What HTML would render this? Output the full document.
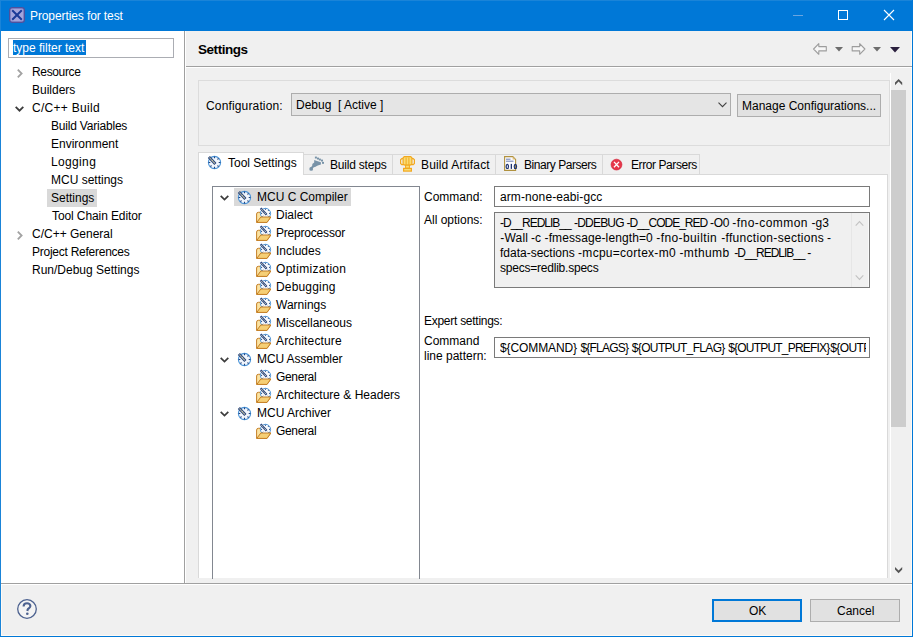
<!DOCTYPE html>
<html><head><meta charset="utf-8">
<style>
html,body{margin:0;padding:0;}
body{width:913px;height:637px;position:relative;overflow:hidden;background:#f0f0f0;font-family:"Liberation Sans",sans-serif;font-size:12px;color:#000;}
.a{position:absolute;}
.t{position:absolute;white-space:pre;line-height:15px;font-size:12px;}
.hl{position:absolute;background:#d9d9d9;}
svg{position:absolute;overflow:visible;}
</style></head><body>

<svg width="0" height="0" style="position:absolute;left:0;top:0">
 <defs>
  <symbol id="clk" viewBox="0 0 16 16">
   <circle cx="8.5" cy="8.5" r="6.1" fill="#f2f6fc" stroke="#4a94d8" stroke-width="1.1"/>
   <path d="M8.5 2.6 V4.3 M8.5 12.7 V14.4 M2.6 8.5 H4.3 M12.7 8.5 H14.4 M4.4 12.6 L5.5 11.5 M12.6 12.6 L11.5 11.5 M12.6 4.4 L11.5 5.5" stroke="#23437e" stroke-width="1.1"/>
   <path d="M2.9 2.9 L9.4 9.9" stroke="#22407c" stroke-width="2.9"/>
   <path d="M3.4 3.5 L8.8 9.3" stroke="#ebe1a8" stroke-width="1.05"/>
   <path d="M3.7 3.8 L8.6 9.1" stroke="#22407c" stroke-width="0.9" stroke-dasharray="0.8 1.4"/>
  </symbol>
  <symbol id="fld" viewBox="0 0 16 16">
   <path d="M0.6 15.4 V7 Q0.6 5.3 2.4 5.3 H6 V10 H14.8 L11 15.4 Z" fill="#fbe3a2" stroke="#c47f26" stroke-width="1"/>
   <circle cx="9.5" cy="6.4" r="5.1" fill="#f6f9fd" stroke="#4f97d8" stroke-width="1"/>
   <path d="M9.5 1.7 V2.8 M14.1 6.4 H13 M5 6.4 H6.1 M12.7 3.2 L11.9 4 M12.7 9.6 L11.9 8.8 M6.3 9.6 L7.1 8.8" stroke="#2a4a82" stroke-width="1"/>
   <path d="M4.6 1.3 L10.6 7.7" stroke="#2a4682" stroke-width="2.2"/>
   <path d="M5.2 2 L10.1 7.2" stroke="#f0e8bc" stroke-width="1" stroke-dasharray="1 0.9"/>
   <path d="M0.8 15.4 L4.8 10 H14.8 L11 15.4 Z" fill="#f5cf76" stroke="#c47f26" stroke-width="1"/>
  </symbol>
 </defs>
</svg>

<!-- window frame -->
<div class="a" style="left:0;top:0;width:913px;height:31px;background:#0078d7;"></div>
<div class="a" style="left:0;top:0;width:913px;height:1px;background:#1a84d8;"></div>
<div class="a" style="left:0;top:0;width:1px;height:637px;background:#1a84d8;"></div>
<div class="a" style="left:911px;top:31px;width:1px;height:605px;background:#fffaf5;"></div>
<div class="a" style="left:1px;top:635px;width:911px;height:1px;background:#fffaf5;"></div>
<div class="a" style="left:1px;top:585px;width:1px;height:50px;background:#fffaf5;"></div>
<div class="a" style="left:912px;top:0;width:1px;height:637px;background:#0078d7;"></div>
<div class="a" style="left:0;top:636px;width:913px;height:1px;background:#0078d7;"></div>

<!-- title icon -->
<svg style="left:9px;top:7px" width="16" height="16" viewBox="0 0 16 16">
  <rect x="0.6" y="0.6" width="14.8" height="14.8" rx="2.6" fill="#8d8fcc" stroke="#4d519e" stroke-width="1.2"/>
  <rect x="2" y="2" width="12" height="12" rx="1.5" fill="#a3a5dc"/>
  <path d="M3.2 3.2 L12.8 12.8 M12.8 3.2 L3.2 12.8" stroke="#1b3a98" stroke-width="2"/>
</svg>
<div class="t" style="top:9px;color:#fff;left:30px;letter-spacing:-0.1px;">Properties for test</div>

<!-- title buttons -->
<div class="a" style="left:793px;top:15px;width:10px;height:1px;background:#6aa5e0;"></div>
<div class="a" style="left:838px;top:10px;width:8px;height:8px;border:1px solid #fff;"></div>
<svg style="left:884px;top:10px" width="10" height="10" viewBox="0 0 10 10">
  <path d="M0 0 L10 10 M10 0 L0 10" stroke="#fff" stroke-width="1.1"/>
</svg>

<!-- left pane -->
<div class="a" style="left:1px;top:31px;width:183px;height:552px;background:#fff;"></div>
<div class="a" style="left:184px;top:31px;width:1px;height:552px;background:#a0a0a0;"></div>
<div class="a" style="left:185px;top:31px;width:1px;height:552px;background:#fff;"></div>

<!-- filter -->
<div class="a" style="left:8px;top:38px;width:164px;height:18px;border:1px solid #abadb3;background:#fff;"></div>
<div class="a" style="left:13px;top:40px;width:73px;height:15px;background:#0078d7;"></div>
<div class="t" style="left:13px;top:41px;color:#fff;">type filter text</div>

<!-- left tree -->
<svg style="left:17px;top:69px" width="6" height="9" viewBox="0 0 6 9"><path d="M0.8 0.7 L4.6 4.5 L0.8 8.3" fill="none" stroke="#a2a2a2" stroke-width="1.8"/></svg>
<div class="t" style="left:32px;top:65px;letter-spacing:-0.35px;">Resource</div>
<div class="t" style="left:32px;top:83px;">Builders</div>
<svg style="left:15px;top:106px" width="9" height="6" viewBox="0 0 9 6"><path d="M0.7 0.9 L4.5 4.7 L8.3 0.9" fill="none" stroke="#3c3c3c" stroke-width="1.8"/></svg>
<div class="t" style="left:32px;top:101px;letter-spacing:0.3px;">C/C++ Build</div>
<div class="t" style="left:51px;top:119px;letter-spacing:-0.2px;">Build Variables</div>
<div class="t" style="left:51px;top:137px;">Environment</div>
<div class="t" style="left:51px;top:155px;letter-spacing:0.35px;">Logging</div>
<div class="t" style="left:51px;top:173px;">MCU settings</div>
<div class="hl" style="left:47px;top:189px;width:50px;height:18px;"></div>
<div class="t" style="left:51px;top:191px;">Settings</div>
<div class="t" style="top:209px;left:52px;letter-spacing:-0.1px;">Tool Chain Editor</div>
<svg style="left:17px;top:231px" width="6" height="9" viewBox="0 0 6 9"><path d="M0.8 0.7 L4.6 4.5 L0.8 8.3" fill="none" stroke="#a2a2a2" stroke-width="1.8"/></svg>
<div class="t" style="left:32px;top:227px;">C/C++ General</div>
<div class="t" style="left:32px;top:245px;letter-spacing:-0.25px;">Project References</div>
<div class="t" style="left:32px;top:263px;">Run/Debug Settings</div>

<!-- header -->
<div class="t" style="left:198px;top:42px;font-weight:bold;font-size:13.5px;letter-spacing:-0.45px;">Settings</div>
<div class="a" style="left:186px;top:66px;width:726px;height:1px;background:#a0a0a0;"></div>
<div class="a" style="left:186px;top:67px;width:726px;height:1px;background:#fff;"></div>

<!-- nav arrows -->
<svg style="left:813px;top:43px" width="15" height="13" viewBox="0 0 15 13"><path d="M0.6 6 L5.8 0.6 L5.8 3.6 L13.3 3.6 L13.3 7.9 L5.8 7.9 L5.8 11.3 Z" fill="#f7f7f7" stroke="#9d9d9d" stroke-width="1.1" stroke-linejoin="round"/></svg>
<svg style="left:835px;top:47px" width="8" height="5" viewBox="0 0 8 5"><path d="M0 0 L8 0 L4 4.5 Z" fill="#6d6d6d"/></svg>
<svg style="left:851px;top:43px" width="15" height="13" viewBox="0 0 15 13"><path d="M13.9 6 L8.7 0.6 L8.7 3.6 L1.2 3.6 L1.2 7.9 L8.7 7.9 L8.7 11.3 Z" fill="#f7f7f7" stroke="#9d9d9d" stroke-width="1.1" stroke-linejoin="round"/></svg>
<svg style="left:873px;top:47px" width="8" height="5" viewBox="0 0 8 5"><path d="M0 0 L8 0 L4 4.5 Z" fill="#6d6d6d"/></svg>
<svg style="left:890px;top:47px" width="10" height="6" viewBox="0 0 10 6"><path d="M0 0 L10 0 L5 5.5 Z" fill="#2a1f3d"/></svg>

<!-- scrollbar -->
<div class="a" style="left:890px;top:73px;width:1px;height:505px;background:#fff;"></div>
<svg style="left:895px;top:79px" width="8" height="7" viewBox="0 0 8 7"><path d="M0 3.6 L3.6 0 L7.2 3.6 L7.2 6.2 L3.6 2.6 L0 6.2 Z" fill="#555"/></svg>
<div class="a" style="left:891px;top:90px;width:15px;height:337px;background:#cdcdcd;"></div>
<svg style="left:895px;top:567px" width="8" height="7" viewBox="0 0 8 7"><path d="M0 2.6 L3.6 6.2 L7.2 2.6 L7.2 0 L3.6 3.6 L0 0 Z" fill="#555"/></svg>

<!-- configuration group -->
<div class="a" style="left:198px;top:80px;width:690px;height:64px;border:1px solid #dcdcdc;"></div>
<div class="t" style="left:206px;top:99px;letter-spacing:0.15px;">Configuration:</div>
<div class="a" style="left:291px;top:93px;width:438px;height:21px;border:1px solid #adadad;background:#e5e5e5;"></div>
<div class="t" style="top:98px;left:296px;">Debug  [ Active ]</div>
<svg style="left:718px;top:102px" width="9" height="6" viewBox="0 0 9 6"><path d="M0.5 0.7 L4.5 4.7 L8.5 0.7" fill="none" stroke="#404040" stroke-width="1.1"/></svg>
<div class="a" style="left:737px;top:94px;width:142px;height:21px;border:1px solid #adadad;background:#e1e1e1;"></div>
<div class="t" style="left:742px;top:99px;">Manage Configurations...</div>

<!-- tabs -->
<div class="a" style="left:198px;top:174px;width:689px;height:404px;background:#fff;"></div>
<div class="a" style="left:198px;top:174px;width:690px;height:1px;background:#d9d9d9;"></div>
<div class="a" style="left:198px;top:174px;width:1px;height:404px;background:#d9d9d9;"></div>
<div class="a" style="left:887px;top:174px;width:1px;height:404px;background:#d9d9d9;"></div>
<div class="a" style="left:303px;top:154px;width:395px;height:19px;border:1px solid #d9d9d9;border-bottom:none;background:#f0f0f0;"></div>
<div class="a" style="left:392px;top:155px;width:1px;height:19px;background:#d9d9d9;"></div>
<div class="a" style="left:495px;top:155px;width:1px;height:19px;background:#d9d9d9;"></div>
<div class="a" style="left:602px;top:155px;width:1px;height:19px;background:#d9d9d9;"></div>
<div class="a" style="left:198px;top:152px;width:104px;height:22px;border:1px solid #d9d9d9;border-bottom:none;background:#fff;"></div>

<div class="t" style="left:228px;top:156px;">Tool Settings</div>
<div class="t" style="left:330px;top:158px;letter-spacing:-0.2px;">Build steps</div>
<div class="t" style="left:421px;top:158px;letter-spacing:0.15px;">Build Artifact</div>
<div class="t" style="left:524px;top:158px;letter-spacing:-0.45px;">Binary Parsers</div>
<div class="t" style="left:631px;top:158px;letter-spacing:-0.42px;">Error Parsers</div>
<!-- tab icons -->
<svg style="left:308px;top:156px" width="16" height="16" viewBox="0 0 16 16">
  <circle cx="3.2" cy="12.9" r="1.9" fill="#7893a8"/>
  <path d="M3 12.5 L6 9.5" stroke="#7893a8" stroke-width="2"/>
  <path d="M6.2 4 L9 4.9 L12.9 6.3 L12.9 8.6 L9.8 9.6 L7 11 L4.4 11.6 L4.3 8 L6.2 6.5 Z" fill="#7893a8"/>
  <rect x="6.9" y="0.6" width="2" height="1.9" fill="#7893a8"/>
  <rect x="9" y="1.6" width="2" height="1.9" fill="#7893a8"/>
  <rect x="10.9" y="2.6" width="2" height="1.9" fill="#7893a8"/>
  <rect x="13" y="3.6" width="2" height="1.9" fill="#7893a8"/>
  <rect x="14" y="5.9" width="2" height="1.9" fill="#7893a8"/>
</svg>
<svg style="left:400px;top:156px" width="16" height="16" viewBox="0 0 16 16">
  <path d="M3.5 2.6 H1.8 L0.6 3.8 V7.4 L1.8 8.6 H3.5 M11.5 2.6 H13.2 L14.4 3.8 V7.4 L13.2 8.6 H11.5" fill="none" stroke="#f2a81f" stroke-width="1.2"/>
  <path d="M4.3 0.6 H10.7 L11.9 1.8 V8.2 Q11 9.2 9.6 9.2 H5.4 Q4 9.2 3.1 8.2 V1.8 Z" fill="#f9dd74" stroke="#f2a81f" stroke-width="1.2"/>
  <path d="M6.1 1.5 V8.8 M8.9 1.5 V8.8" stroke="#f2a81f" stroke-width="1"/>
  <rect x="5.6" y="9.2" width="3.8" height="3" fill="#f9dd74" stroke="#f2a81f" stroke-width="1"/>
  <rect x="3.6" y="12.4" width="7.8" height="2.7" fill="#f9dd74" stroke="#f2a81f" stroke-width="1.2"/>
</svg>
<svg style="left:504px;top:156px" width="16" height="16" viewBox="0 0 16 16">
  <path d="M0.6 0.6 L8.8 0.6 L11.6 3.4 L11.6 14.4 L0.6 14.4 Z" fill="#fbfbff" stroke="#b0913e" stroke-width="1.1"/>
  <path d="M8.6 0.8 L8.6 3.6 L11.4 3.6 Z" fill="#e2c27a"/>
  <path d="M2 3.2 H6.5 M2 5.2 H9.5" stroke="#5a70a8" stroke-width="0.9"/>
  <ellipse cx="3.3" cy="10.4" rx="1.15" ry="2.1" fill="none" stroke="#1d3370" stroke-width="1.2"/><rect x="6.7" y="7.9" width="1.3" height="5" fill="#1d3370"/><ellipse cx="11.4" cy="10.4" rx="1.15" ry="2.1" fill="none" stroke="#1d3370" stroke-width="1.2"/>
</svg>
<svg style="left:610px;top:158px" width="13" height="13" viewBox="0 0 13 13">
  <circle cx="6.5" cy="6.6" r="5.4" fill="#e6374a" stroke="#d2243a" stroke-width="0.7"/>
  <path d="M4 3.9 L9 9.3 M9 3.9 L4 9.3" stroke="#fff" stroke-width="1.3"/>
</svg>

<!-- tool tree -->
<div class="a" style="left:212px;top:186px;width:206px;height:392px;border:1px solid #828790;border-bottom:none;"></div>
<div class="hl" style="left:234px;top:188px;width:117px;height:18px;"></div>
<svg style="left:220px;top:195px" width="9" height="6" viewBox="0 0 9 6"><path d="M0.7 0.8 L4.5 4.6 L8.3 0.8" fill="none" stroke="#3c3c3c" stroke-width="1.7"/></svg>
<div class="t" style="left:257px;top:190px;">MCU C Compiler</div>
<div class="t" style="left:276px;top:208px;">Dialect</div>
<div class="t" style="left:276px;top:226px;letter-spacing:-0.2px;">Preprocessor</div>
<div class="t" style="left:276px;top:244px;">Includes</div>
<div class="t" style="left:276px;top:262px;letter-spacing:0.3px;">Optimization</div>
<div class="t" style="left:276px;top:280px;letter-spacing:0.17px;">Debugging</div>
<div class="t" style="left:276px;top:298px;">Warnings</div>
<div class="t" style="left:276px;top:316px;">Miscellaneous</div>
<div class="t" style="left:276px;top:334px;letter-spacing:0.15px;">Architecture</div>
<svg style="left:220px;top:357px" width="9" height="6" viewBox="0 0 9 6"><path d="M0.7 0.8 L4.5 4.6 L8.3 0.8" fill="none" stroke="#3c3c3c" stroke-width="1.7"/></svg>
<div class="t" style="left:257px;top:352px;letter-spacing:-0.1px;">MCU Assembler</div>
<div class="t" style="left:276px;top:370px;letter-spacing:-0.35px;">General</div>
<div class="t" style="left:276px;top:388px;">Architecture &amp; Headers</div>
<svg style="left:220px;top:411px" width="9" height="6" viewBox="0 0 9 6"><path d="M0.7 0.8 L4.5 4.6 L8.3 0.8" fill="none" stroke="#3c3c3c" stroke-width="1.7"/></svg>
<div class="t" style="left:257px;top:406px;">MCU Archiver</div>
<div class="t" style="left:276px;top:424px;letter-spacing:-0.35px;">General</div>

<!-- tree icons -->
<svg style="left:206px;top:154px" width="16" height="16"><use href="#clk"/></svg>
<svg style="left:236px;top:189px" width="16" height="16"><use href="#clk"/></svg>
<svg style="left:236px;top:351px" width="16" height="16"><use href="#clk"/></svg>
<svg style="left:236px;top:405px" width="16" height="16"><use href="#clk"/></svg>
<svg style="left:256px;top:207px" width="16" height="16"><use href="#fld"/></svg>
<svg style="left:256px;top:225px" width="16" height="16"><use href="#fld"/></svg>
<svg style="left:256px;top:243px" width="16" height="16"><use href="#fld"/></svg>
<svg style="left:256px;top:261px" width="16" height="16"><use href="#fld"/></svg>
<svg style="left:256px;top:279px" width="16" height="16"><use href="#fld"/></svg>
<svg style="left:256px;top:297px" width="16" height="16"><use href="#fld"/></svg>
<svg style="left:256px;top:315px" width="16" height="16"><use href="#fld"/></svg>
<svg style="left:256px;top:333px" width="16" height="16"><use href="#fld"/></svg>
<svg style="left:256px;top:369px" width="16" height="16"><use href="#fld"/></svg>
<svg style="left:256px;top:387px" width="16" height="16"><use href="#fld"/></svg>
<svg style="left:256px;top:423px" width="16" height="16"><use href="#fld"/></svg>

<!-- right fields -->
<div class="t" style="left:424px;top:190px;">Command:</div>
<div class="a" style="left:494px;top:186px;width:374px;height:19px;border:1px solid #7a7a7a;background:#fff;"></div>
<div class="t" style="left:500px;top:190px;letter-spacing:0.1px;">arm-none-eabi-gcc</div>
<div class="t" style="left:424px;top:213px;">All options:</div>
<div class="a" style="left:494px;top:212px;width:374px;height:74px;border:1px solid #7a7a7a;background:#f0f0f0;"></div>
<div class="a" style="left:851px;top:213px;width:1px;height:74px;background:#e6e6e6;"></div>
<div class="a" style="left:868px;top:213px;width:1px;height:74px;background:#fafafa;"></div>
<svg style="left:855px;top:220px" width="9" height="7" viewBox="0 0 9 7"><path d="M0.7 5.6 L4.5 1.6 L8.3 5.6" fill="none" stroke="#c2c2c2" stroke-width="1.1"/></svg>
<svg style="left:855px;top:274px" width="9" height="7" viewBox="0 0 9 7"><path d="M0.7 1.4 L4.5 5.4 L8.3 1.4" fill="none" stroke="#c2c2c2" stroke-width="1.1"/></svg>
<div class="t" style="left:500px;top:216px;letter-spacing:-1.0px;">-D__REDLIB__</div>
<div class="t" style="left:574px;top:216px;letter-spacing:-0.8px;">-DDEBUG</div>
<div class="t" style="left:626.5px;top:216px;letter-spacing:-1.0px;">-D__CODE_RED</div>
<div class="t" style="left:710px;top:216px;letter-spacing:-0.3px;">-O0</div>
<div class="t" style="left:732.3px;top:216px;letter-spacing:0.45px;">-fno-common</div>
<div class="t" style="left:811.6px;top:216px;letter-spacing:0px;">-g3</div>
<div class="t" style="left:500.3px;top:231px;letter-spacing:0.2px;">-Wall</div>
<div class="t" style="left:531px;top:231px;letter-spacing:0px;">-c</div>
<div class="t" style="left:544.6px;top:231px;letter-spacing:0.1px;">-fmessage-length=0</div>
<div class="t" style="left:656.3px;top:231px;letter-spacing:0.4px;">-fno-builtin</div>
<div class="t" style="left:721.2px;top:231px;letter-spacing:0.3px;">-ffunction-sections</div>
<div class="t" style="left:827px;top:231px;letter-spacing:0px;">-</div>
<div class="t" style="left:500px;top:246px;letter-spacing:0px;">fdata-sections</div>
<div class="t" style="left:578.1px;top:246px;letter-spacing:0.27px;">-mcpu=cortex-m0</div>
<div class="t" style="left:679.4px;top:246px;letter-spacing:0.4px;">-mthumb</div>
<div class="t" style="left:734.3px;top:246px;letter-spacing:-1.05px;">-D__REDLIB__</div>
<div class="t" style="left:807.2px;top:246px;letter-spacing:0px;">-</div>
<div class="t" style="left:500px;top:261px;letter-spacing:-0.22px;">specs=redlib.specs</div>

<div class="t" style="top:314px;left:424px;letter-spacing:-0.27px;">Expert settings:</div>
<div class="t" style="left:424px;top:334px;">Command</div>
<div class="t" style="left:424px;top:349px;">line pattern:</div>
<div class="a" style="left:494px;top:337px;width:374px;height:19px;border:1px solid #7a7a7a;background:#fff;"></div>
<div class="a" style="left:500px;top:338px;width:366px;height:19px;overflow:hidden;"><div class="t" style="left:0px;top:3px;letter-spacing:-0.1px;">${COMMAND}</div><div class="t" style="left:80.5px;top:3px;letter-spacing:-0.8px;">${FLAGS}</div><div class="t" style="left:131.8px;top:3px;letter-spacing:-0.65px;">${OUTPUT_FLAG}</div><div class="t" style="left:228.2px;top:3px;letter-spacing:-0.8px;">${OUTPUT_PREFIX}</div><div class="t" style="left:330.2px;top:3px;letter-spacing:-0.6px;">${OUTPUT}</div></div>

<!-- bottom separator -->
<div class="a" style="left:1px;top:583px;width:911px;height:1px;background:#a0a0a0;"></div>
<div class="a" style="left:1px;top:584px;width:911px;height:1px;background:#fff;"></div>

<!-- help -->
<svg style="left:17px;top:599px" width="20" height="20" viewBox="0 0 20 20">
  <circle cx="10" cy="10" r="9.3" fill="#f4f4f4" stroke="#4d6290" stroke-width="1.3"/>
  <path d="M6.6 7.4 C6.6 4.9 8.2 4.2 10 4.2 C12 4.2 13.4 5.3 13.4 7 C13.4 8.8 11.2 9.4 10.6 10.6 L10.4 12" fill="none" stroke="#4d6290" stroke-width="2.1"/>
  <circle cx="10.3" cy="14.8" r="1.3" fill="#4d6290"/>
</svg>

<!-- buttons -->
<div class="a" style="left:712px;top:599px;width:86px;height:19px;border:2px solid #0078d7;background:#e1e1e1;"></div>
<div class="t" style="left:749px;top:604px;">OK</div>
<div class="a" style="left:810px;top:599px;width:88px;height:21px;border:1px solid #adadad;background:#e1e1e1;"></div>
<div class="t" style="top:604px;left:837px;">Cancel</div>

</body></html>
